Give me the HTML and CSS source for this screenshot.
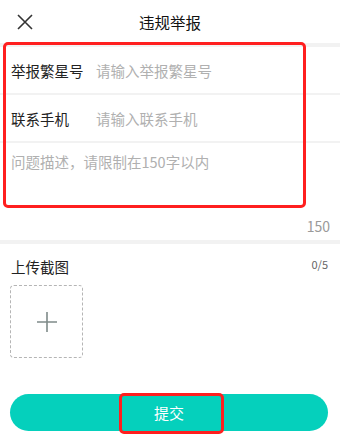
FILE: index.html
```html
<!DOCTYPE html>
<html lang="zh-CN">
<head>
  <meta charset="UTF-8" />
  <meta name="viewport" content="width=device-width, initial-scale=1.0"/>
  <title>违规举报</title>
  <link rel="stylesheet" href="styles.css">
</head>
<body>
  <div class="pagina">

    <!-- Cabecera -->
    <div class="cabecera">
      <span class="cerrar">
        <svg width="18" height="18" viewBox="0 0 18 18">
          <path d="M2 2 L16 16 M16 2 L2 16" stroke="#333" stroke-width="1.6" fill="none"/>
        </svg>
      </span>
      <h3>违规举报</h3>
    </div>
    <div class="separador"></div>

    <!-- Formulario -->
    <div class="fila">
      <label>举报繁星号</label>
      <span class="placeholder">请输入举报繁星号</span>
    </div>
    <div class="fila">
      <label>联系手机</label>
      <span class="placeholder">请输入联系手机</span>
    </div>
    <div class="descripcion">
      <p class="placeholder">问题描述，请限制在150字以内</p>
      <span class="contador">150</span>
    </div>
    <div class="separador"></div>

    <!-- Subir capturas -->
    <div class="subir">
      <div class="subir-titulo">
        <span>上传截图</span>
        <span class="subir-num">0/5</span>
      </div>
      <div class="caja-subir">
        <svg width="22" height="22" viewBox="0 0 22 22">
          <path d="M11 1 V21 M1 11 H21" stroke="#7f8b89" stroke-width="1.6" fill="none"/>
        </svg>
      </div>
    </div>

    <button class="boton-enviar">提交</button>

    <!-- marcas rojas -->
    <div class="marca marca-form"></div>
    <div class="marca marca-boton"></div>
  </div>
</body>
</html>
```

FILE: styles.css
```css
* { margin: 0; padding: 0; box-sizing: border-box; }

body {
  font-family: "Noto Sans CJK SC", "Noto Sans", sans-serif;
  background: #fff;
  color: #222;
}

.pagina {
  position: relative;
  width: 340px;
  height: 440px;
}

.cabecera {
  height: 43px;
  display: flex;
  align-items: center;
  justify-content: center;
  position: relative;
}

.cabecera h3 {
  font-size: 15.5px;
  font-weight: normal;
  color: #111;
}

.cerrar {
  position: absolute;
  left: 16px;
  top: 13px;
  display: flex;
}

.separador {
  height: 4px;
  background: #f2f2f2;
}

.fila {
  height: 48px;
  display: flex;
  align-items: center;
  padding-left: 11px;
  border-bottom: 2px solid #f2f2f2;
  font-size: 14.5px;
}

.fila label {
  width: 85px;
  color: #222;
}

.placeholder {
  color: #b0b0b0;
  font-size: 14.5px;
}

.descripcion {
  height: 97px;
  padding: 8px 10px 0 11px;
  display: flex;
  flex-direction: column;
  justify-content: space-between;
}

.contador {
  align-self: flex-end;
  color: #9a9a9a;
  font-size: 14px;
  margin-bottom: 4px;
}

.subir {
  padding: 12px 12px 0 10px;
}

.subir-titulo {
  display: flex;
  justify-content: space-between;
  font-size: 14.5px;
  padding-left: 1px;
}

.subir-num {
  font-size: 11px;
  color: #666;
}

.caja-subir {
  margin-top: 8px;
  width: 73px;
  height: 73px;
  border: 1px dashed #b5b5b5;
  border-radius: 4px;
  display: flex;
  align-items: center;
  justify-content: center;
}

.boton-enviar {
  display: block;
  margin: 36px 0 0 10px;
  width: 318px;
  height: 37px;
  border: none;
  border-radius: 19px;
  background: #05d0bc;
  color: #fff;
  font-family: inherit;
  font-size: 15px;
}

.marca {
  position: absolute;
  border: 3.5px solid #ff1f1f;
  border-radius: 5px;
}

.marca-form {
  left: 3px;
  top: 42px;
  width: 303px;
  height: 166px;
}

.marca-boton {
  left: 119px;
  top: 393px;
  width: 105px;
  height: 41px;
}
```
